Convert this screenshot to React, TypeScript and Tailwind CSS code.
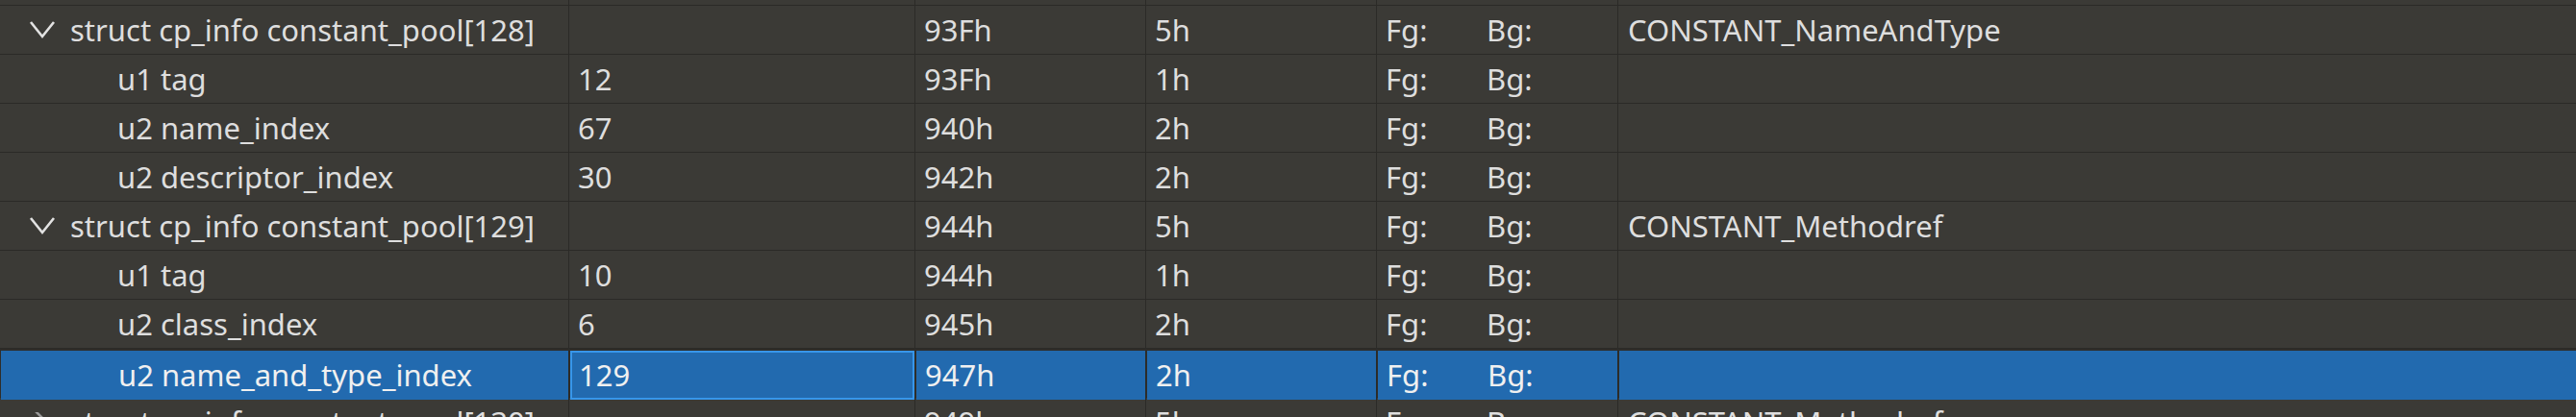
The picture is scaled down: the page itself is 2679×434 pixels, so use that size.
type Row = {
  name: string;
  value?: string;
  offset: string;
  size: string;
  comment?: string;
  kind: "open" | "closed" | "leaf";
  selected?: boolean;
};

const rows: Row[] = [
  { name: "struct cp_info constant_pool[128]", offset: "93Fh", size: "5h", comment: "CONSTANT_NameAndType", kind: "open" },
  { name: "u1 tag", value: "12", offset: "93Fh", size: "1h", kind: "leaf" },
  { name: "u2 name_index", value: "67", offset: "940h", size: "2h", kind: "leaf" },
  { name: "u2 descriptor_index", value: "30", offset: "942h", size: "2h", kind: "leaf" },
  { name: "struct cp_info constant_pool[129]", offset: "944h", size: "5h", comment: "CONSTANT_Methodref", kind: "open" },
  { name: "u1 tag", value: "10", offset: "944h", size: "1h", kind: "leaf" },
  { name: "u2 class_index", value: "6", offset: "945h", size: "2h", kind: "leaf" },
  { name: "u2 name_and_type_index", value: "129", offset: "947h", size: "2h", kind: "leaf", selected: true },
  { name: "struct cp_info constant_pool[130]", offset: "949h", size: "5h", comment: "CONSTANT_Methodref", kind: "closed" },
];

const cols = "grid grid-cols-[592px_360px_240px_240px_251px_1fr]";

function Chevron({ open }: { open: boolean }) {
  return (
    <svg width="28" height="20" viewBox="0 0 28 20" className="shrink-0">
      {open ? (
        <path d="M2 2 L14 17 L26 2" fill="none" stroke="#e2e2e2" strokeWidth="2.6" />
      ) : (
        <path d="M6 -2 L18 10 L6 22" fill="none" stroke="#9a9a9a" strokeWidth="2.6" />
      )}
    </svg>
  );
}

function TableRow({ row }: { row: Row }) {
  const sel = row.selected;
  const cell = sel
    ? "flex items-center pl-[9px] border-r border-[#2b2a27] bg-[#226aaf] mt-[2px] ml-[1px] whitespace-nowrap overflow-hidden"
    : "flex items-center pl-[9px] border-r border-[#2b2a27] whitespace-nowrap overflow-hidden";
  return (
    <div className={`${cols} h-[51px] shrink-0 border-b border-[#2b2a27] ${sel ? "bg-[#2e2d2a] text-[#f0f0f0]" : ""}`}>
      <div className={`${cell} ${sel ? "ml-0" : ""}`}>
        {row.kind === "leaf" ? (
          <span className="pl-[113px]">{row.name}</span>
        ) : (
          <div className="flex items-center pl-[21px] gap-[15px]">
            <Chevron open={row.kind === "open"} />
            <span>{row.name}</span>
          </div>
        )}
      </div>
      {sel ? (
        <div className="flex items-center pl-[7px] mt-[2px] ml-[1px] mr-[1px] bg-[#226aaf] border-2 border-[#3796ea]">
          {row.value}
        </div>
      ) : (
        <div className={cell}>{row.value}</div>
      )}
      <div className={cell}>{row.offset}</div>
      <div className={cell}>{row.size}</div>
      <div className={cell}>
        <span className="w-[105px]">Fg:</span>
        <span>Bg:</span>
      </div>
      <div className={`${cell} border-r-0 ml-[1px]`}>{row.comment}</div>
    </div>
  );
}

export default function App() {
  return (
    <div className="w-full h-[434px] overflow-hidden bg-[#3b3a36] text-[#dedede] text-[31px] flex flex-col font-['Noto_Sans',sans-serif]">
      <div className={`${cols} h-[6px] shrink-0 border-b border-[#2b2a27]`}>
        <div className="border-r border-[#2b2a27]" />
        <div className="border-r border-[#2b2a27]" />
        <div className="border-r border-[#2b2a27]" />
        <div className="border-r border-[#2b2a27]" />
        <div className="border-r border-[#2b2a27]" />
        <div />
      </div>
      {rows.map((r, i) => (
        <TableRow key={i} row={r} />
      ))}
    </div>
  );
}
